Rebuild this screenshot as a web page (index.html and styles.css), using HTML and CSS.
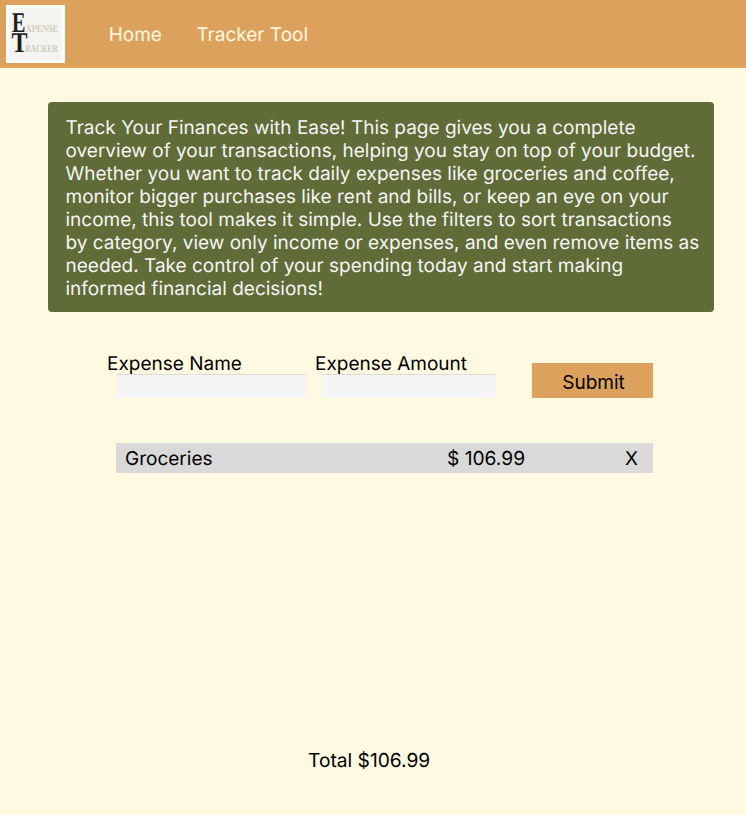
FILE: index.html
```html
<!DOCTYPE html>
<html lang="en">
<head>
<meta charset="utf-8">
<title>Expense Tracker</title>
<link rel="stylesheet" href="styles.css">
</head>
<body>
<header class="navbar">
  <svg class="logo" viewBox="0 0 59 58" width="59" height="58">
    <rect width="59" height="58" fill="#fff"/>
    <rect x="3" y="3" width="53" height="52" fill="#f4f4f1"/>
    <g class="logo-small">
      <text x="20" y="27" textLength="32" lengthAdjust="spacingAndGlyphs">XPENSE</text>
      <text x="19" y="47" textLength="33" lengthAdjust="spacingAndGlyphs">RACKER</text>
    </g>
    <g class="logo-large">
      <text x="6" y="27" textLength="13.5" lengthAdjust="spacingAndGlyphs">E</text>
      <text x="5.5" y="47" textLength="16" lengthAdjust="spacingAndGlyphs">T</text>
    </g>
  </svg>
  <nav class="links"><a>Home</a><a>Tracker Tool</a></nav>
</header>
<main>
  <section class="intro">Track Your Finances with Ease! This page gives you a complete<br>overview of your transactions, helping you stay on top of your budget.<br>Whether you want to track daily expenses like groceries and coffee,<br>monitor bigger purchases like rent and bills, or keep an eye on your<br>income, this tool makes it simple. Use the filters to sort transactions<br>by category, view only income or expenses, and even remove items as<br>needed. Take control of your spending today and start making<br>informed financial decisions!</section>
  <form class="entry">
    <div class="field name"><label for="name">Expense Name</label><input id="name"></div>
    <div class="field amount"><label for="amount">Expense Amount</label><input id="amount"></div>
    <button type="button" class="submit">Submit</button>
  </form>
  <div class="expense"><span>Groceries</span><span class="price">$ 106.99</span><span class="remove">X</span></div>
  <p class="total">Total $106.99</p>
</main>
</body>
</html>
```
FILE: styles.css
```css
* { box-sizing: border-box; }
body { margin: 0; height: 815px; overflow: hidden; background: #fef9e0; color: #000; font: 400 19px/23px Inter, sans-serif; text-rendering: geometricPrecision; }
.navbar { height: 68px; background: #dda15e; display: flex; padding: 5px 0 0 6px; }
.logo { display: block; font-family: "Liberation Serif", serif; font-weight: 700; }
.logo-small { font-size: 10.5px; fill: #cfcbb5; }
.logo-large { font-size: 28.5px; fill: #1d1d1d; }
.links { display: flex; gap: 34.5px; margin: 18px 0 0 43.7px; color: #fefae0; }
.intro { width: 666px; height: 210px; margin: 34px 0 0 48px; padding: 14px 0 0 17.5px; background: #606c38; border-radius: 4px; color: #f5f5f5; white-space: nowrap; }
.entry { display: flex; margin: 40px 0 0 107px; height: 47px; }
.field label { display: block; height: 22px; }
.field input { display: block; height: 24px; border: 0; border-top: 1px solid #dcdcd2; border-radius: 3px; background: #f5f5f5; padding: 0; }
.name { width: 208px; }
.name input { width: 191px; margin-left: 9px; }
.amount { width: 217px; }
.amount input { width: 175px; margin-left: 6px; }
.submit { width: 121px; height: 35px; margin-top: 11px; padding: 3px 0 0 2px; border: 0; background: #dda15e; color: #000; font: inherit; }
.expense { display: grid; grid-template-columns: 322px 178px auto; width: 537px; height: 30px; margin: 44px 0 0 116px; padding: 4px 9px 0; background: #d9d9d9; }
.price { font-size: 19.2px; }
.total { margin: 276px 0 0 308px; font-size: 19.2px; }
```
